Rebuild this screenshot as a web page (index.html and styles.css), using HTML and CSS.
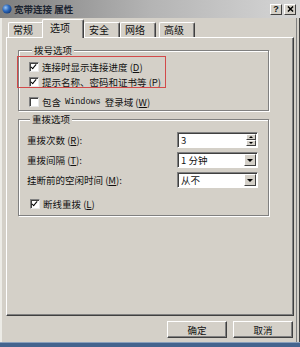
FILE: index.html
```html
<!DOCTYPE html>
<html lang="zh-CN">
<head>
  <meta charset="UTF-8">
  <title>宽带连接 属性</title>
  <link rel="stylesheet" href="styles.css">
</head>
<body>
  <div class="window">
    <div class="titlebar">
      <svg class="title-icon" viewBox="0 0 10 10">
        <defs>
          <radialGradient id="globe" cx="35%" cy="35%" r="70%">
            <stop offset="0" stop-color="#9cc4f0"/>
            <stop offset="0.5" stop-color="#2f6cc0"/>
            <stop offset="1" stop-color="#123a7a"/>
          </radialGradient>
        </defs>
        <circle cx="5" cy="5" r="4.6" fill="url(#globe)"/>
      </svg>
      <span class="title">宽带连接 属性</span>
      <div class="title-buttons">
        <span class="tbtn">?</span>
        <span class="tbtn">
          <svg viewBox="0 0 8 7"><path d="M1 0.5 L7 6.5 M7 0.5 L1 6.5" stroke="#000" stroke-width="1.6"/></svg>
        </span>
      </div>
    </div>

    <div class="tabs">
      <div class="tab">常规</div>
      <div class="tab active">选项</div>
      <div class="tab">安全</div>
      <div class="tab">网络</div>
      <div class="tab">高级</div>
    </div>

    <div class="panel">
      <fieldset class="group group-dial">
        <legend>拨号选项</legend>
        <div class="marked">
          <label class="check"><span class="box checked"></span>连接时显示连接进度 (<u>D</u>)</label>
          <label class="check"><span class="box checked"></span>提示名称、密码和证书等 (<u>P</u>)</label>
        </div>
        <label class="check spaced"><span class="box"></span>包含<span class="mono">Windows</span>登录域 (<u>W</u>)</label>
      </fieldset>

      <fieldset class="group group-redial">
        <legend>重拨选项</legend>
        <div class="field">
          <span>重拨次数 (<u>R</u>):</span>
          <div class="input spin">
            <span class="value">3</span>
            <span class="spin-buttons">
              <span class="spin-btn"><i class="tri-up"></i></span>
              <span class="spin-btn"><i class="tri-down small"></i></span>
            </span>
          </div>
        </div>
        <div class="field">
          <span>重拨间隔 (<u>T</u>):</span>
          <div class="input combo">
            <span class="value">1 分钟</span>
            <span class="drop"><i class="tri-down"></i></span>
          </div>
        </div>
        <div class="field">
          <span>挂断前的空闲时间 (<u>M</u>):</span>
          <div class="input combo">
            <span class="value">从不</span>
            <span class="drop"><i class="tri-down"></i></span>
          </div>
        </div>
        <label class="check spaced"><span class="box checked"></span>断线重拨 (<u>L</u>)</label>
      </fieldset>
    </div>

    <div class="buttons">
      <button>确定</button>
      <button>取消</button>
    </div>
    <div class="taskbar"></div>
  </div>
</body>
</html>
```

FILE: styles.css
```css
body {
  margin: 0;
  background-color: #d4d0c8;
  font-family: "Noto Sans CJK SC", "Noto Sans", sans-serif;
  font-size: 9.5px;
  color: #111;
}

.window {
  width: 300px;
  height: 347px;
  display: flex;
  flex-direction: column;
  box-shadow: inset -1px 0 0 #404040, inset -3px 0 0 #d4d0c8, inset -4px 0 0 #808080, inset 2px 0 0 #ecebe6;
}

/* title bar */
.titlebar {
  height: 18px;
  flex: none;
  display: flex;
  align-items: center;
  padding: 0 4px 0 2px;
  background: linear-gradient(to right, #7e7e7e, #b4b4b4 50%, #d6d6d6);
}

.title-icon {
  width: 10px;
  height: 10px;
  margin-right: 2px;
}

.title {
  flex: 1;
  font-size: 9.5px;
  font-weight: bold;
  color: #1c2430;
}

.title-buttons {
  display: flex;
  gap: 2px;
}

.tbtn {
  width: 12px;
  height: 11px;
  box-sizing: border-box;
  display: flex;
  align-items: center;
  justify-content: center;
  background: #d4d0c8;
  border-top: 1px solid #fff;
  border-left: 1px solid #fff;
  border-right: 1px solid #404040;
  border-bottom: 1px solid #404040;
  font-family: "Liberation Sans", sans-serif;
  font-size: 9px;
  font-weight: bold;
  line-height: 9px;
}

.tbtn svg {
  width: 7px;
  height: 6px;
}

/* tabs */
.tabs {
  height: 19px;
  flex: none;
  display: flex;
  align-items: flex-end;
  padding-left: 8px;
}

.tab {
  height: 15px;
  box-sizing: border-box;
  padding: 1px 10px 0 4px;
  border-top: 1px solid #fff;
  border-left: 1px solid #fff;
  border-right: 1px solid #404040;
  border-radius: 2px 2px 0 0;
  box-shadow: inset -1px 0 0 #808080;
  font-size: 10px;
  line-height: 11px;
}

.tab.active {
  height: 19px;
  margin: 0 0 -1px -2px;
  padding: 0 13px 0 7px;
  background: #d4d0c8;
  position: relative;
  z-index: 1;
  line-height: 16px;
}

.tab:last-child {
  margin-left: 3px;
}

/* panel */
.panel {
  height: 279px;
  flex: none;
  box-sizing: border-box;
  margin: 0 6px;
  padding: 6px 24px 0 11px;
  border-top: 1px solid #fff;
  border-left: 1px solid #fff;
  border-right: 1px solid #404040;
  border-bottom: 1px solid #404040;
  box-shadow: inset -1px -1px 0 #808080;
}

.group {
  margin: 0;
  min-width: 0;
  border: 1px solid #808080;
  box-shadow: inset 1px 1px 0 #fff, 1px 1px 0 #fff;
}

.group legend {
  margin-left: 3px;
  padding: 0 2px;
  line-height: 12px;
  font-size: 9.5px;
  background: #d4d0c8;
}

.group-dial {
  padding: 3px 0 1px 10px;
}

.group-redial {
  margin-top: 2px;
  padding: 5px 10px 2px 8px;
}

.marked {
  position: relative;
}

.marked::after {
  content: "";
  position: absolute;
  left: -12px;
  top: -3px;
  width: 147px;
  height: 30px;
  border: 1px solid #d24a4a;
}

.check {
  height: 15px;
  display: flex;
  align-items: center;
}

.check.spaced {
  margin-top: 5px;
}

.group-redial .check {
  height: 18px;
  padding-left: 3px;
}

.box {
  width: 10px;
  height: 10px;
  box-sizing: border-box;
  margin-right: 3px;
  background: #fff;
  border: 1px solid;
  border-color: #808080 #e8e8e8 #e8e8e8 #808080;
  box-shadow: inset 1px 1px 0 #404040;
  position: relative;
}

.box.checked::after {
  content: "";
  position: absolute;
  left: 2px;
  top: 0px;
  width: 2px;
  height: 5px;
  border-right: 1.6px solid #000;
  border-bottom: 1.6px solid #000;
  transform: rotate(40deg);
}

.mono {
  font-family: "Liberation Mono", monospace;
  font-size: 8.5px;
  margin: 0 4px;
}

u {
  text-decoration-thickness: 1px;
}

/* redial fields */
.field {
  height: 20px;
  display: flex;
  align-items: center;
  justify-content: space-between;
}

.input {
  width: 81px;
  height: 16px;
  box-sizing: border-box;
  display: flex;
  align-items: stretch;
  background: #fff;
  border: 1px solid;
  border-color: #808080 #fff #fff #808080;
  box-shadow: inset 1px 1px 0 #404040;
  padding: 1px 1px 1px 1px;
}

.input .value {
  flex: 1;
  padding-left: 2px;
  line-height: 13px;
}

.spin-buttons {
  width: 10px;
  display: flex;
  flex-direction: column;
}

.spin-btn,
.drop {
  display: flex;
  align-items: center;
  justify-content: center;
  background: #d4d0c8;
  box-sizing: border-box;
  border-top: 1px solid #fff;
  border-left: 1px solid #fff;
  border-right: 1px solid #404040;
  border-bottom: 1px solid #404040;
}

.spin-btn {
  flex: 1;
}

.drop {
  width: 12px;
}

.tri-down {
  width: 0;
  height: 0;
  border-left: 3px solid transparent;
  border-right: 3px solid transparent;
  border-top: 3px solid #000;
}

.tri-down.small,
.tri-up {
  border-left-width: 2px;
  border-right-width: 2px;
  border-top-width: 2px;
}

.tri-up {
  width: 0;
  height: 0;
  border-left: 2px solid transparent;
  border-right: 2px solid transparent;
  border-bottom: 2px solid #000;
}

/* dialog buttons */
.buttons {
  height: 26px;
  flex: none;
  box-sizing: border-box;
  display: flex;
  justify-content: flex-end;
  gap: 6px;
  padding: 5px 7px 0 0;
}

.buttons button {
  width: 60px;
  height: 17px;
  padding: 0;
  background: #d4d0c8;
  border-top: 1px solid #fff;
  border-left: 1px solid #fff;
  border-right: 1px solid #404040;
  border-bottom: 1px solid #404040;
  box-shadow: inset -1px -1px 0 #808080;
  font-family: "Noto Sans CJK SC", sans-serif;
  font-size: 9.5px;
  line-height: 14px;
  color: #111;
}

.taskbar {
  flex: 1;
  background: #44648e;
  border-top: 1px solid #8aa0bc;
}
```
